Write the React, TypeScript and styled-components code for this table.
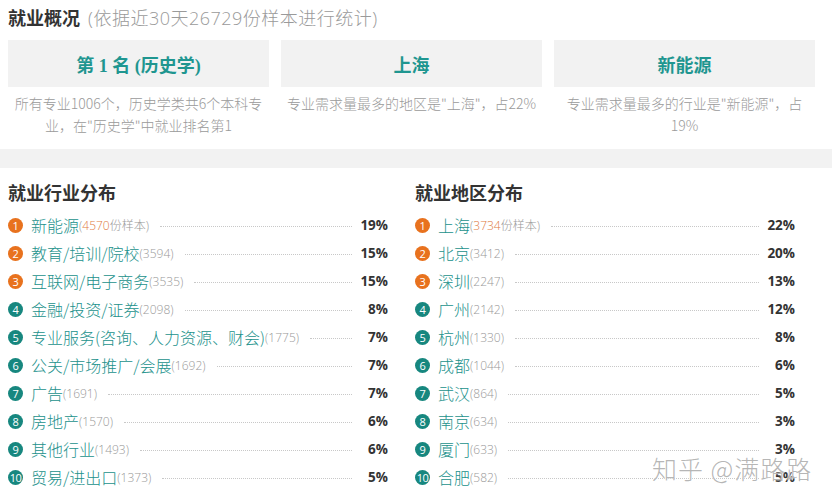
import React from "react";
import styled, { createGlobalStyle } from "styled-components";

const GlobalStyle = createGlobalStyle`
  html, body {
    margin: 0;
    padding: 0;
    background: #fff;
  }
  body {
    font-family: "Open Sans", "Noto Sans CJK SC", sans-serif;
    color: #333;
  }
`;

const Page = styled.div`
  position: relative;
  width: 832px;
  height: 500px;
  overflow: hidden;
`;

const Overview = styled.section`
  padding: 6px 8px 13px;
`;

const TitleRow = styled.h2`
  margin: 0;
  height: 24px;
  line-height: 24px;
  font-size: 18px;
  font-weight: 700;
  color: #333;
  white-space: nowrap;
`;

const SubTitle = styled.span`
  margin-left: 8px;
  font-weight: 300;
  color: #9a9a9a;
  font-size: 18px;
  letter-spacing: 0.5px;
`;

const Cards = styled.div`
  margin-top: 10px;
  display: grid;
  grid-template-columns: repeat(3, 261px);
  column-gap: 12px;
`;

const Card = styled.div`
  display: flex;
  flex-direction: column;
`;

const CardTitle = styled.div`
  height: 47px;
  background: #f2f2f2;
  display: flex;
  align-items: center;
  justify-content: center;
  font-family: "Liberation Serif", "Noto Sans CJK SC", serif;
  font-weight: 700;
  font-size: 18px;
  color: #1f9690;
`;

const CardDesc = styled.p`
  margin: 0;
  padding: 5px 4px 0;
  text-align: center;
  font-family: "Noto Sans CJK SC", sans-serif;
  font-size: 14px;
  font-weight: 300;
  line-height: 22px;
  color: #9a9a9a;
  height: 44px;
`;

const Band = styled.div`
  height: 19px;
  background: #f2f2f2;
`;

const Columns = styled.div`
  display: grid;
  grid-template-columns: 380px 380px;
  column-gap: 27px;
  padding: 13px 8px 0;
`;

const Column = styled.div`
  display: flex;
  flex-direction: column;
`;

const ColHeading = styled.h3`
  margin: 0 0 6px;
  height: 24px;
  line-height: 24px;
  font-size: 18px;
  font-weight: 700;
  color: #333;
`;

const Row = styled.div`
  display: flex;
  align-items: center;
  height: 28px;
`;

const Badge = styled.span<{ $hot: boolean }>`
  flex: none;
  width: 15px;
  height: 15px;
  border-radius: 50%;
  background: ${(p) => (p.$hot ? "#e8721e" : "#17877f")};
  color: #fff;
  font-size: 11px;
  line-height: 15px;
  text-align: center;
  margin-right: 8px;
  letter-spacing: -0.5px;
`;

const Name = styled.span`
  font-family: "Noto Sans CJK SC", sans-serif;
  font-size: 16px;
  font-weight: 300;
  color: #22918b;
  white-space: nowrap;
`;

const Count = styled.span`
  font-size: 12px;
  font-weight: 300;
  color: #999;
  white-space: nowrap;
  font-family: "Open Sans", "Noto Sans CJK SC", sans-serif;
`;

const Hl = styled.span`
  color: #e07b3f;
`;

const Leader = styled.span`
  flex: 1;
  margin: 2px 0 0 11px;
  border-bottom: 1px dotted #c8c8c8;
`;

const Pct = styled.span`
  flex: none;
  width: 36px;
  text-align: right;
  font-size: 13.5px;
  font-weight: 700;
  color: #333;
`;

const Watermark = styled.div`
  position: absolute;
  left: 652px;
  top: 450px;
  font-family: "Noto Sans CJK SC", sans-serif;
  font-size: 25px;
  font-weight: 300;
  letter-spacing: 1px;
  color: rgba(150, 150, 150, 0.7);
  text-shadow: 0 0 2px #fff, 0 0 1px #fff;
  white-space: nowrap;
`;

type Item = { name: string; count: number; pct: string };

const industries: Item[] = [
  { name: "新能源", count: 4570, pct: "19%" },
  { name: "教育/培训/院校", count: 3594, pct: "15%" },
  { name: "互联网/电子商务", count: 3535, pct: "15%" },
  { name: "金融/投资/证券", count: 2098, pct: "8%" },
  { name: "专业服务(咨询、人力资源、财会)", count: 1775, pct: "7%" },
  { name: "公关/市场推广/会展", count: 1692, pct: "7%" },
  { name: "广告", count: 1691, pct: "7%" },
  { name: "房地产", count: 1570, pct: "6%" },
  { name: "其他行业", count: 1493, pct: "6%" },
  { name: "贸易/进出口", count: 1373, pct: "5%" },
];

const regions: Item[] = [
  { name: "上海", count: 3734, pct: "22%" },
  { name: "北京", count: 3412, pct: "20%" },
  { name: "深圳", count: 2247, pct: "13%" },
  { name: "广州", count: 2142, pct: "12%" },
  { name: "杭州", count: 1330, pct: "8%" },
  { name: "成都", count: 1044, pct: "6%" },
  { name: "武汉", count: 864, pct: "5%" },
  { name: "南京", count: 634, pct: "3%" },
  { name: "厦门", count: 633, pct: "3%" },
  { name: "合肥", count: 582, pct: "5%" },
];

const summary = [
  { title: "第 1 名 (历史学)", desc: "所有专业1006个，历史学类共6个本科专业，在\"历史学\"中就业排名第1" },
  { title: "上海", desc: "专业需求量最多的地区是\"上海\"，占22%" },
  { title: "新能源", desc: "专业需求量最多的行业是\"新能源\"，占19%" },
];

const RankList = ({ title, items }: { title: string; items: Item[] }) => (
  <Column>
    <ColHeading>{title}</ColHeading>
    {items.map((it, i) => (
      <Row key={it.name}>
        <Badge $hot={i < 3}>{i + 1}</Badge>
        <Name>{it.name}</Name>
        <Count>
          {i === 0 ? (
            <>
              (<Hl>{it.count}</Hl>份样本)
            </>
          ) : (
            `(${it.count})`
          )}
        </Count>
        <Leader />
        <Pct>{it.pct}</Pct>
      </Row>
    ))}
  </Column>
);

export default function App() {
  return (
    <Page>
      <GlobalStyle />
      <Overview>
        <TitleRow>
          就业概况<SubTitle>(依据近30天26729份样本进行统计)</SubTitle>
        </TitleRow>
        <Cards>
          {summary.map((s) => (
            <Card key={s.title}>
              <CardTitle>{s.title}</CardTitle>
              <CardDesc>{s.desc}</CardDesc>
            </Card>
          ))}
        </Cards>
      </Overview>
      <Band />
      <Columns>
        <RankList title="就业行业分布" items={industries} />
        <RankList title="就业地区分布" items={regions} />
      </Columns>
      <Watermark>知乎 @满路路</Watermark>
    </Page>
  );
}
